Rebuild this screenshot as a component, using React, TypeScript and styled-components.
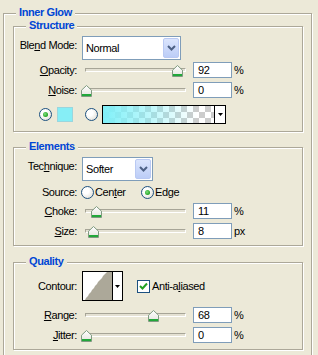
import React, { FC, ReactNode } from 'react';
import styled, { createGlobalStyle } from 'styled-components';

const GlobalStyle = createGlobalStyle`
  body {
    background: #ece9d8;
    color: #000;
    font-family: "Liberation Sans", Tahoma, Arial, sans-serif;
    font-size: 11px;
    letter-spacing: -0.4px;
    margin: 0;
    overflow: hidden;
  }
`;

const Page = styled.div`
  box-sizing: border-box;
  height: 355px;
  overflow: hidden;
  padding: 13px 0 0 3px;
`;

const Group = styled.div<{ $outer?: boolean; $top?: number }>`
  border: 1px solid #aca899;
  box-shadow: inset 1px 1px 0 #fff, 1px 1px 0 #fff;
  box-sizing: border-box;
  display: flex;
  flex-direction: column;
  margin-top: ${(p) => p.$top ?? 0}px;
  position: relative;
  width: ${(p) => (p.$outer ? 309 : 290)}px;
  ${(p) => (p.$outer ? 'height: 343px; border-bottom: none; padding: 12px 0 0 9px;' : '')}
`;

const GroupBody = styled.div<{ $bottom: number }>`
  display: flex;
  flex-direction: column;
  padding-bottom: ${(p) => p.$bottom}px;
`;

const Title = styled.div`
  background: #ece9d8;
  color: #0046d5;
  font-weight: bold;
  left: 12px;
  line-height: 13px;
  padding: 0 3px;
  position: absolute;
  top: -8px;
`;

const Row = styled.div<{ $top: number; $h: number; $pad?: number }>`
  align-items: center;
  display: flex;
  height: ${(p) => p.$h}px;
  margin-top: ${(p) => p.$top}px;
  padding-left: ${(p) => p.$pad ?? 0}px;
`;

const Label = styled.div<{ $alignTop?: boolean }>`
  align-self: ${(p) => (p.$alignTop ? 'flex-start' : 'center')};
  flex-shrink: 0;
  line-height: 13px;
  padding-top: ${(p) => (p.$alignTop ? 3 : 0)}px;
  text-align: right;
  white-space: nowrap;
  width: 63px;
`;

const U = styled.span`
  text-decoration: underline;
  text-underline-offset: 1px;
`;

const SelectBox = styled.div<{ $w: number }>`
  align-items: center;
  background: #fff;
  border: 1px solid #7f9db9;
  box-sizing: border-box;
  display: flex;
  height: 24px;
  margin-left: 5px;
  width: ${(p) => p.$w}px;
`;

const SelectText = styled.div`
  flex: 1;
  padding-left: 3px;
`;

const DropButton = styled.div`
  align-items: center;
  background: linear-gradient(#dbe5fd, #bccdf7);
  border: 1px solid #b9c9f3;
  border-radius: 2px;
  box-sizing: border-box;
  display: flex;
  height: 20px;
  justify-content: center;
  margin-right: 1px;
  width: 16px;
`;

const SliderBox = styled.div`
  height: 16px;
  margin-left: 4px;
  position: relative;
  width: 108px;
`;

const Track = styled.div`
  background: #e4e1d3;
  border-bottom: 1px solid #fff;
  border-left: 1px solid #a7a597;
  border-right: 1px solid #fff;
  border-top: 1px solid #a7a597;
  box-sizing: border-box;
  height: 4px;
  left: 4px;
  position: absolute;
  top: 6px;
  width: 101px;
`;

const ThumbWrap = styled.div`
  height: 12px;
  position: absolute;
  top: 3px;
`;

const NumBox = styled.div`
  background: #fff;
  border: 1px solid #7f9db9;
  box-sizing: border-box;
  height: 16px;
  line-height: 14px;
  margin-left: 4px;
  padding-left: 4px;
  width: 39px;
`;

const Unit = styled.div`
  margin-left: 2px;
`;

const RadioCircle = styled.div<{ $left?: number }>`
  align-items: center;
  background: radial-gradient(circle at 35% 35%, #fff 30%, #d8d6cc 100%);
  border: 1px solid #1c5180;
  border-radius: 50%;
  box-sizing: border-box;
  display: flex;
  flex-shrink: 0;
  height: 13px;
  justify-content: center;
  margin-left: ${(p) => p.$left ?? 0}px;
  width: 13px;
`;

const RadioDot = styled.div`
  background: radial-gradient(circle at 40% 40%, #7fe07f 0%, #21a121 70%);
  border-radius: 50%;
  height: 5px;
  width: 5px;
`;

const Swatch = styled.div`
  background: #86eef6;
  border: 1px solid #9ad6de;
  box-sizing: border-box;
  height: 15px;
  margin-left: 5px;
  width: 16px;
`;

const GradientBox = styled.div`
  border: 1px solid #000;
  box-sizing: border-box;
  display: flex;
  height: 19px;
  margin-left: 4px;
  width: 124px;
`;

const GradientFill = styled.div`
  background:
    linear-gradient(to right, rgba(128, 240, 248, 1) 0%, rgba(128, 240, 248, 0.55) 40%, rgba(128, 240, 248, 0) 85%),
    repeating-conic-gradient(#cccccc 0% 25%, #ffffff 0% 50%) 0 0 / 12px 12px;
  flex: 1;
`;

const ArrowCell = styled.div`
  align-items: center;
  background: #fff;
  border-left: 1px solid #000;
  display: flex;
  justify-content: center;
  width: 10px;
`;

const Option = styled.div<{ $w?: number }>`
  align-items: center;
  display: flex;
  width: ${(p) => (p.$w ? `${p.$w}px` : 'auto')};
`;

const OptionText = styled.span`
  margin-left: 1px;
`;

const ContourBox = styled.div`
  border: 1px solid #000;
  box-sizing: border-box;
  display: flex;
  height: 30px;
  margin-left: 5px;
  width: 41px;
`;

const ContourPreview = styled.div`
  background: #fff;
  display: flex;
  width: 29px;
`;

const CheckBox = styled.div`
  align-items: center;
  background: #fff;
  border: 1px solid #1c5180;
  box-sizing: border-box;
  display: flex;
  height: 13px;
  justify-content: center;
  margin-left: 14px;
  width: 13px;
`;

const CheckText = styled.span`
  margin-left: 2px;
`;

const Chevron = () => (
  <svg width="9" height="6" viewBox="0 0 9 6">
    <polyline points="1,1 4.5,4.5 8,1" fill="none" stroke="#4d6185" strokeWidth="2" />
  </svg>
);

const SmallArrow = () => (
  <svg width="5" height="3" viewBox="0 0 5 3">
    <polygon points="0,0 5,0 2.5,3" fill="#000" />
  </svg>
);

const Thumb = () => (
  <svg width="11" height="12" viewBox="0 0 11 12">
    <defs>
      <linearGradient id="tg" x1="0" y1="0" x2="0" y2="1">
        <stop offset="0" stopColor="#ffffff" />
        <stop offset="1" stopColor="#e3e3dc" />
      </linearGradient>
    </defs>
    <path d="M5.5 0.5 L10.5 5.2 V11.5 H0.5 V5.2 Z" fill="url(#tg)" stroke="#7f9a80" />
    <rect x="1" y="9" width="9" height="2" fill="#21a83a" />
  </svg>
);

const Select: FC<{ width: number; value: string }> = ({ width, value }) => (
  <SelectBox $w={width}>
    <SelectText>{value}</SelectText>
    <DropButton>
      <Chevron />
    </DropButton>
  </SelectBox>
);

type SliderProps = {
  label: ReactNode;
  value: string;
  unit: string;
  pos: number;
  top: number;
};
const SliderRow: FC<SliderProps> = ({ label, value, unit, pos, top }) => (
  <Row $top={top} $h={16}>
    <Label>{label}</Label>
    <SliderBox>
      <Track />
      <ThumbWrap style={{ left: Math.round(pos * 99) }}>
        <Thumb />
      </ThumbWrap>
    </SliderBox>
    <NumBox>{value}</NumBox>
    <Unit>{unit}</Unit>
  </Row>
);

const Radio: FC<{ checked?: boolean; left?: number }> = ({ checked, left }) => (
  <RadioCircle $left={left}>{checked && <RadioDot />}</RadioCircle>
);

const App: FC = () => (
  <Page>
    <GlobalStyle />
    <Group $outer>
      <Title>Inner Glow</Title>

      <Group>
        <Title>Structure</Title>
        <GroupBody $bottom={7}>
          <Row $top={9} $h={24}>
            <Label $alignTop>
              Ble<U>n</U>d Mode:
            </Label>
            <Select width={99} value="Normal" />
          </Row>
          <SliderRow top={2} label={<><U>O</U>pacity:</>} value="92" unit="%" pos={0.92} />
          <SliderRow top={4} label={<><U>N</U>oise:</>} value="0" unit="%" pos={0} />
          <Row $top={7} $h={19} $pad={25}>
            <Radio checked />
            <Swatch />
            <Radio left={12} />
            <GradientBox>
              <GradientFill />
              <ArrowCell>
                <SmallArrow />
              </ArrowCell>
            </GradientBox>
          </Row>
        </GroupBody>
      </Group>

      <Group $top={15}>
        <Title>Elements</Title>
        <GroupBody $bottom={6}>
          <Row $top={9} $h={24}>
            <Label $alignTop>
              Tec<U>h</U>nique:
            </Label>
            <Select width={71} value="Softer" />
          </Row>
          <Row $top={4} $h={14}>
            <Label>Source:</Label>
            <Option $w={64}>
              <Radio left={4} />
              <OptionText>
                Cen<U>t</U>er
              </OptionText>
            </Option>
            <Option>
              <Radio checked />
              <OptionText>
                Ed<U>g</U>e
              </OptionText>
            </Option>
          </Row>
          <SliderRow top={4} label={<><U>C</U>hoke:</>} value="11" unit="%" pos={0.1} />
          <SliderRow top={4} label={<><U>S</U>ize:</>} value="8" unit="px" pos={0.07} />
        </GroupBody>
      </Group>

      <Group $top={16}>
        <Title>Quality</Title>
        <GroupBody $bottom={6}>
          <Row $top={8} $h={30}>
            <Label>Contour:</Label>
            <ContourBox>
              <ContourPreview>
                <svg width="29" height="28" viewBox="0 0 29 28">
                  <polygon
                    points="2,28 3,26 5,24 6,22 8,20 9,18 11,16 12,14 14,12 15,10 17,8 19,6 20,4 22,2 24,0 29,0 29,28"
                    fill="#aca899"
                  />
                </svg>
              </ContourPreview>
              <ArrowCell>
                <SmallArrow />
              </ArrowCell>
            </ContourBox>
            <CheckBox>
              <svg width="9" height="8" viewBox="0 0 9 8">
                <polyline points="1,4 3.5,6.5 8,1.5" fill="none" stroke="#21a121" strokeWidth="2" />
              </svg>
            </CheckBox>
            <CheckText>
              Anti-a<U>l</U>iased
            </CheckText>
          </Row>
          <SliderRow top={6} label={<><U>R</U>ange:</>} value="68" unit="%" pos={0.68} />
          <SliderRow top={4} label={<><U>J</U>itter:</>} value="0" unit="%" pos={0} />
        </GroupBody>
      </Group>
    </Group>
  </Page>
);

export default App;
